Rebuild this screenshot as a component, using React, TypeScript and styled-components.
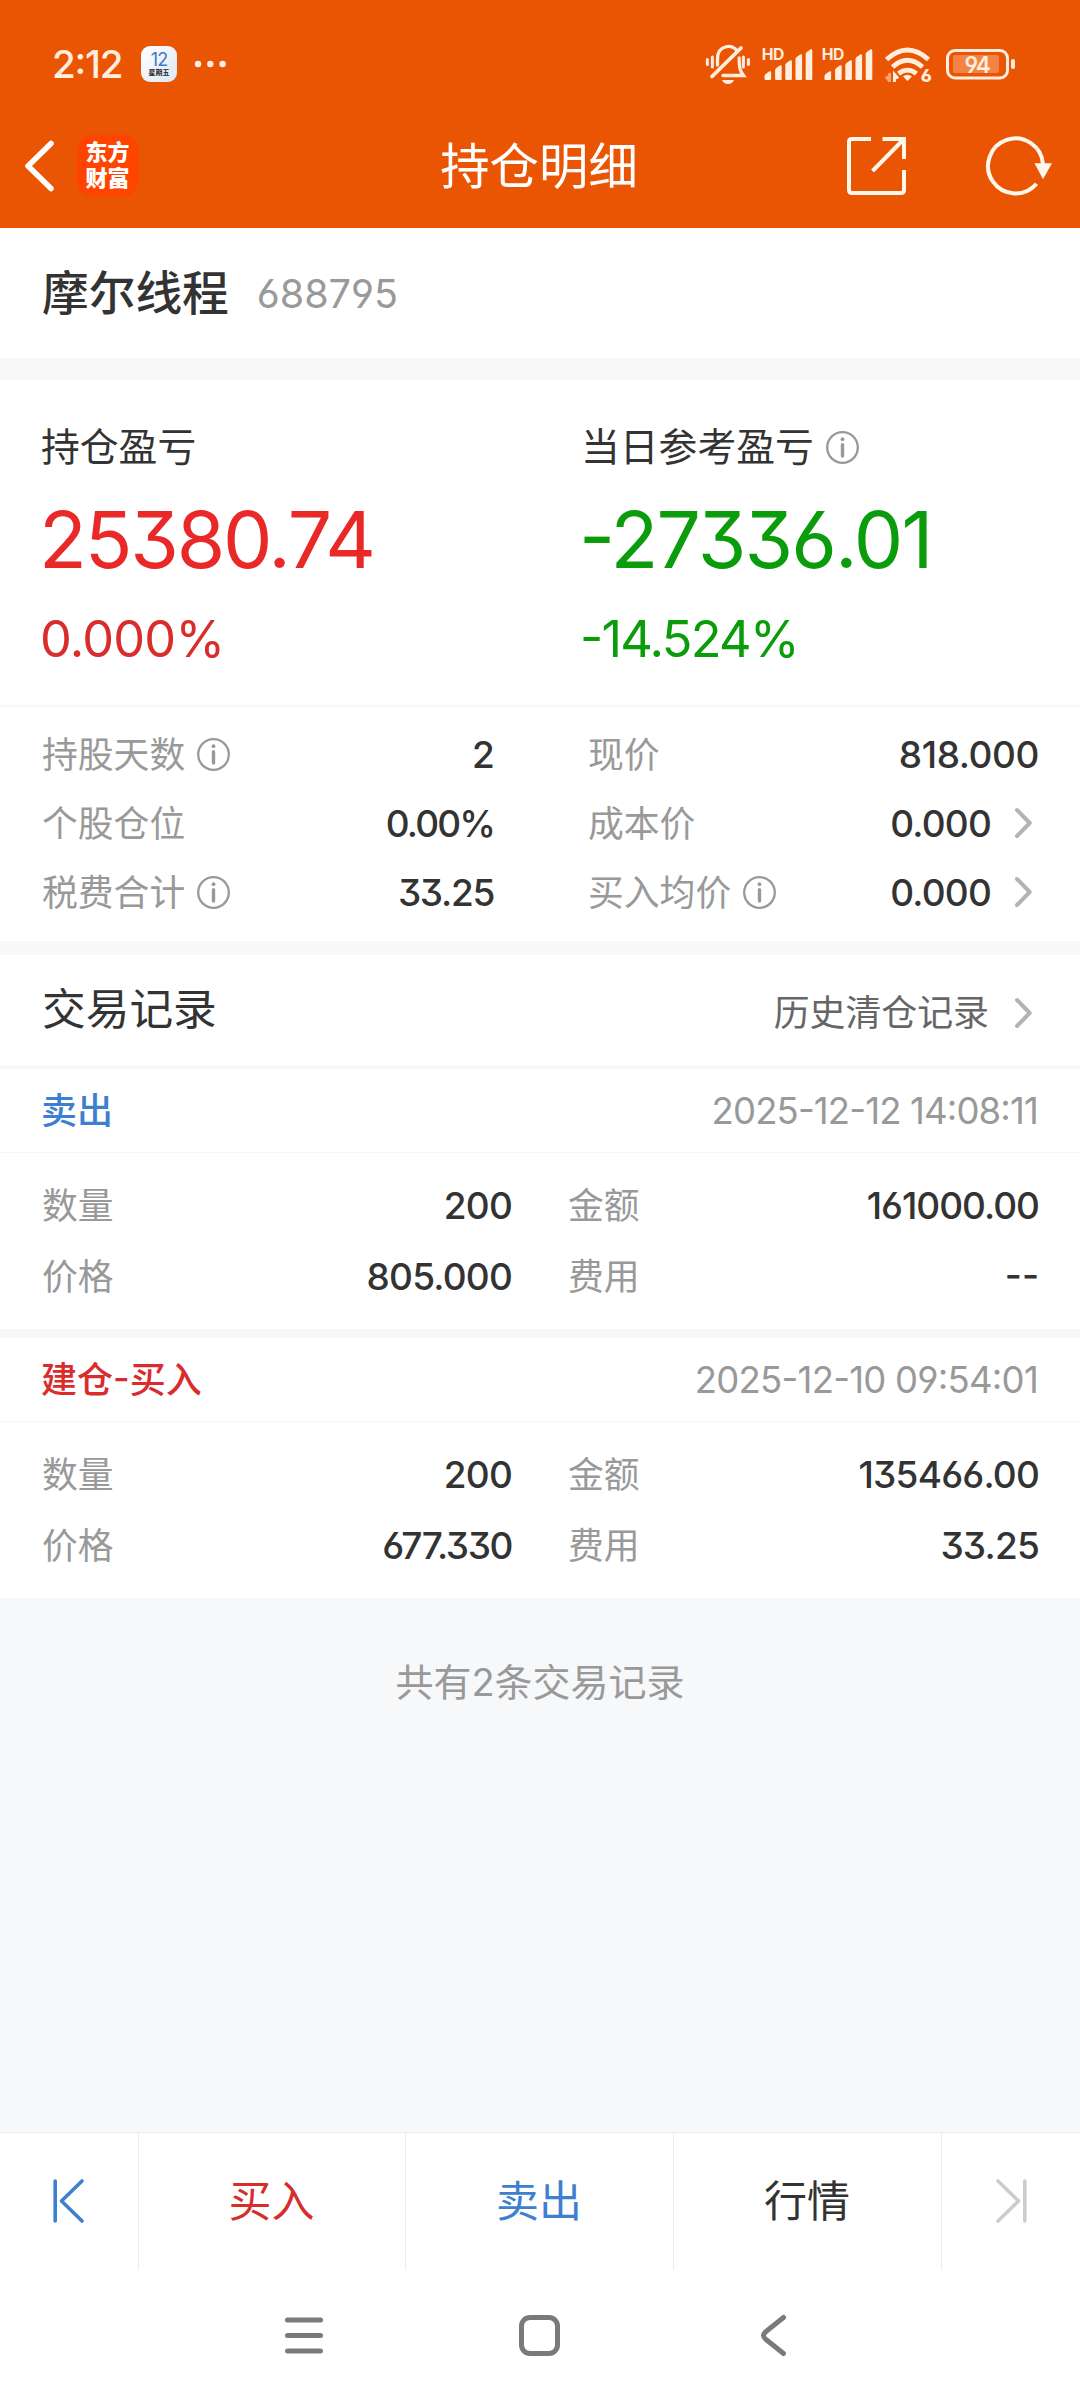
import React from "react";
import styled, { createGlobalStyle } from "styled-components";

const color = {
  brand: "#ea5504",
  cream: "#ffeedd",
  ink: "#333333",
  mid: "#666666",
  soft: "#999999",
  red: "#d92c2c",
  brightRed: "#e92828",
  green: "#0a9c0a",
  blue: "#3e7fd0",
  gap: "#f6f8fa",
};

const GlobalStyle = createGlobalStyle`
  html, body { margin: 0; padding: 0; background: #fff; }
  * { box-sizing: border-box; }
  body {
    font-family: Inter, "Noto Sans CJK SC", sans-serif;
    font-feature-settings: "case", "cv03", "cv04", "cv09";
    color: ${color.ink};
  }
  svg { display: block; flex: none; overflow: visible; }
`;

const Screen = styled.div`
  width: 1080px;
  height: 2400px;
  display: flex;
  flex-direction: column;
  background: #fff;
  overflow: hidden;
`;

const TopArea = styled.header`
  height: 228px;
  flex: none;
  background: ${color.brand};
  color: #fff;
`;

const StatusBar = styled.div`
  height: 128px;
  padding: 0 65px 0 52px;
  display: flex;
  align-items: center;
  color: ${color.cream};
`;

const Clock = styled.span`
  width: 89px;
  font-size: 38.5px;
  line-height: 44px;
  font-weight: 500;
  letter-spacing: -1.2px;
`;

const CalendarBadge = styled.div`
  width: 36px;
  height: 36px;
  margin-right: 17px;
  border-radius: 9px;
  background: linear-gradient(135deg, #fff, #dfe7f1);
  display: flex;
  flex-direction: column;
  align-items: center;
  padding-top: 5px;
`;

const CalendarDay = styled.span`
  font-size: 18px;
  line-height: 18px;
  letter-spacing: -1px;
  color: #3d7cc9;
`;

const CalendarWeek = styled.span`
  font-size: 7px;
  line-height: 8px;
  font-weight: 700;
  color: #222;
`;

const StatusIcons = styled.div`
  margin-left: auto;
  display: flex;
`;

const TitleBar = styled.div`
  height: 75px;
  padding: 0 28px 0 24px;
  display: grid;
  grid-template-columns: 1fr auto 1fr;
  align-items: center;
`;

const TitleSide = styled.div<{ $end?: boolean }>`
  display: flex;
  align-items: center;
  justify-content: ${(p) => (p.$end ? "flex-end" : "flex-start")};
  gap: ${(p) => (p.$end ? 80 : 22)}px;
`;

const PageTitle = styled.h1`
  margin: 0;
  padding-left: 2px;
  font-size: 49.4px;
  line-height: 60px;
  font-weight: 400;
`;

const BrandMark = styled.div`
  width: 61px;
  height: 61px;
  border-radius: 14px;
  background: #ff4400;
  display: flex;
  flex-direction: column;
  align-items: center;
  justify-content: center;
  padding-bottom: 2px;
  font-size: 22px;
  line-height: 26px;
  font-weight: 900;
`;

const StockRow = styled.section`
  height: 130px;
  padding: 0 42px;
  display: flex;
  align-items: center;
  gap: 28px;
`;

const StockName = styled.span`
  font-size: 46.7px;
  line-height: 60px;
  font-weight: 500;
`;

const StockCode = styled.span`
  padding-top: 2px;
  font-size: 39.5px;
  line-height: 60px;
  color: ${color.soft};
`;

const Gap = styled.div<{ $h: number }>`
  height: ${(p) => p.$h}px;
  flex: none;
  background: ${color.gap};
`;

const Summary = styled.section`
  height: 327px;
  padding: 40px 42px 0 41px;
  display: grid;
  grid-template-columns: 540px 1fr;
  border-bottom: 2px solid #f7f7f8;
`;

const SummaryTitle = styled.div`
  display: flex;
  align-items: center;
  gap: 12px;
  height: 54px;
  font-size: 38.8px;
  line-height: 54px;
`;

const BigNumber = styled.div<{ $tone: string; $track: number }>`
  margin: 21px 0 0 -2px;
  font-size: 78.5px;
  line-height: 90px;
  letter-spacing: ${(p) => p.$track}px;
  color: ${(p) => p.$tone};
`;

const Percent = styled.div<{ $tone: string; $track: number }>`
  margin: 24px 0 0 -1px;
  font-size: 50.5px;
  line-height: 60px;
  letter-spacing: ${(p) => p.$track}px;
  color: ${(p) => p.$tone};
`;

const DetailGrid = styled.section`
  height: 234px;
  padding: 12px 43px 0 42px;
  display: grid;
  grid-template-columns: 450px 449px;
  column-gap: 96px;
  grid-auto-rows: 69px;
`;

const TradeGrid = styled.div`
  padding: 17px 43px 0 42px;
  display: grid;
  grid-template-columns: 468px 469px;
  column-gap: 58px;
  grid-auto-rows: 70.5px;
`;

const Cell = styled.div`
  display: flex;
  align-items: center;
`;

const Label = styled.span`
  display: flex;
  align-items: center;
  gap: 12px;
  padding-top: 2px;
  font-size: 35.8px;
  line-height: 50px;
  color: ${color.soft};
`;

const Value = styled.span<{ $track?: number }>`
  margin-left: auto;
  margin-right: -2px;
  padding-top: 2px;
  font-size: 37px;
  line-height: 50px;
  font-weight: 450;
  letter-spacing: ${(p) => p.$track ?? -0.8}px;
`;

const ChevronSlot = styled.span`
  padding: 0 5px 0 26px;
`;

const RecordsHead = styled.section`
  height: 110px;
  padding: 0 43px 0 42px;
  display: flex;
  align-items: center;
  justify-content: space-between;
`;

const RecordsTitle = styled.h2`
  margin: 0 0 1px;
  font-size: 43.7px;
  line-height: 56px;
  font-weight: 400;
`;

const HistoryLink = styled.a`
  margin-top: 5px;
  display: flex;
  align-items: center;
  font-size: 35.9px;
  line-height: 50px;
  color: ${color.mid};
`;

const TradeCard = styled.article`
  height: 260px;
  flex: none;
`;

const TradeHead = styled.div`
  height: 84px;
  padding: 0 42px 0 41px;
  display: flex;
  align-items: center;
  justify-content: space-between;
  border-bottom: 1px solid #f4f5f5;
`;

const TradeKind = styled.span<{ $tone: string }>`
  font-size: 36px;
  line-height: 50px;
  font-weight: 500;
  color: ${(p) => p.$tone};
`;

const TradeTime = styled.time<{ $track: number }>`
  padding-top: 1px;
  font-size: 36.5px;
  line-height: 50px;
  letter-spacing: ${(p) => p.$track}px;
  color: ${color.soft};
`;

const EndNote = styled.div`
  flex: 1;
  padding-top: 59px;
  background: ${color.gap};
  text-align: center;
  font-size: 38px;
  line-height: 50px;
  color: ${color.soft};
`;

const ActionBar = styled.nav`
  height: 138px;
  flex: none;
  display: grid;
  grid-template-columns: 139px 267px 268px 268px 138px;
  border-top: 1px solid #ececec;
`;

const Action = styled.button<{ $tone?: string }>`
  border: 0;
  border-right: 1px solid #ececec;
  padding: 0 1px 2px 0;
  background: none;
  display: flex;
  align-items: center;
  justify-content: center;
  font-family: inherit;
  font-size: 43px;
  line-height: 56px;
  color: ${(p) => p.$tone ?? color.ink};
  &:last-child { border-right: 0; padding-right: 0; }
`;

const SystemNav = styled.div`
  height: 130px;
  flex: none;
  padding: 0 285px;
  display: grid;
  grid-template-columns: 38px 433px 35px;
  align-items: center;
  justify-items: center;
`;

const Info = () => (
  <svg width="33" height="33" viewBox="0 0 33 33" fill="none" stroke="#999">
    <circle cx="16.5" cy="16.5" r="15.3" strokeWidth="2.3" />
    <path d="M16.5 13.8V25" strokeWidth="3.4" strokeLinecap="round" />
    <circle cx="16.5" cy="8.2" r="1.9" fill="#999" stroke="none" />
  </svg>
);

const Chevron = () => (
  <ChevronSlot>
    <svg width="17" height="30" viewBox="0 0 17 30" fill="none" stroke="#b3b3b3" strokeWidth="4" strokeLinecap="round" strokeLinejoin="round">
      <path d="M2 2 14.7 15 2 28" />
    </svg>
  </ChevronSlot>
);

const bars = [
  [0, 52], [10.6, 46], [20.8, 41], [31, 35], [41.2, 30],
];

const Signal = ({ x }: { x: number }) => (
  <g>
    <text x={x - 2.7} y="39.7" fontSize="15.7" fontWeight="700" letterSpacing="-0.4">HD</text>
    {bars.map(([dx, top]) => (
      <path key={dx} d={`M${x + dx} ${top + 4}q0-1.2 1.2-2l3.4-2.4q2-1.2 2 1V59q0 1-1 1h-4.6q-1 0-1-1z`} />
    ))}
  </g>
);

const StatusGlyphs = () => (
  <svg width="310" height="60" viewBox="15 14 310 60" fill={color.cream} stroke="none">
    {/* muted bell with vibration marks */}
    <g fill="none" stroke={color.cream} strokeWidth="3.3" strokeLinecap="round">
      <path d="M17.4 39.5v5M22.4 37v10M53.4 37v10M58.4 39.5v5" strokeWidth="3" />
      <path d="M27.5 45V39C27.5 24 44 24 47 31" />
      <path d="M22 56.5 51 28" strokeWidth="3.8" />
      <path d="M33 55.5H53.5C50 51 49.2 48 49.2 38" />
    </g>
    <path d="M32 60h12q-1.5 4-6 4t-6-4z" />
    <Signal x={74.5} />
    <Signal x={134.5} />
    {/* wifi */}
    <g fill="none" stroke={color.cream} strokeWidth="4.8">
      <path d="M196.5 39.5Q217.5 20.5 238.5 39.5" />
      <path d="M202.5 47Q217.5 33.5 232.5 47" />
      <path d="M208.5 53.7Q217.5 46.5 226.5 53.7" />
    </g>
    <path d="M213 56.5q4.5-3.5 9 0L217.5 61z" />
    <path d="M199.500 53v9M199.500 61l-3.500-4.500" fill="none" stroke="#f9a36d" strokeWidth="3" />
    <path d="M204.500 62V54.500l3.500 4" fill="none" stroke={color.cream} strokeWidth="3" />
    <text x="230.8" y="62.3" fontSize="17.5" fontWeight="800">6</text>
    {/* battery */}
    <rect x="257.5" y="30.5" width="60" height="27.5" rx="7.5" fill="none" stroke={color.cream} strokeWidth="3" />
    <rect x="263" y="35" width="46" height="18" rx="2" fill="#f28446" />
    <rect x="321" y="39" width="4" height="10" rx="2" />
    <text x="287" y="52.7" textAnchor="middle" fontSize="22.5" fontWeight="600" letterSpacing="-1.3">94</text>
  </svg>
);

const Dots = () => (
  <svg width="32" height="8" viewBox="0 0 32 8" fill={color.cream}>
    <circle cx="4" cy="4" r="3.2" />
    <circle cx="16.3" cy="4" r="3.2" />
    <circle cx="28.6" cy="4" r="3.2" />
  </svg>
);

const BackIcon = () => (
  <svg width="31" height="50" viewBox="0 0 31 50" fill="none" stroke="#fff" strokeWidth="5.5" strokeLinejoin="round">
    <path d="M27 2.5 4 25 27 47.5" strokeLinecap="round" />
  </svg>
);

const ShareIcon = () => (
  <svg width="59" height="58" viewBox="0 0 59 58" fill="none" stroke="#fff7ea" strokeWidth="4">
    <path d="M24 2H5Q2 2 2 5V53Q2 56 5 56H54Q57 56 57 53V33" />
    <path d="M35.5 2H57V22M56 3 25.5 34" />
  </svg>
);

const RefreshIcon = () => (
  <svg width="66" height="60" viewBox="0 0.7 66 60" fill="none" stroke="#fff7ea" strokeWidth="4">
    <path d="M50.5 48.5A27.5 27.5 0 1 1 57 29" />
    <path d="M48.5 28H66L57 44z" fill="#fff7ea" stroke="none" />
  </svg>
);

const EdgeIcon = ({ tone, flip }: { tone: string; flip?: boolean }) => (
  <svg width="31" height="44" viewBox="0 0 31 44" fill="none" stroke={tone} strokeWidth="3.6" strokeLinecap="round" strokeLinejoin="round">
    <path d={flip ? "M28.8 2V42M2 2 22.5 22 2 42" : "M2.2 2V42M29 2 8.5 22 29 42"} />
  </svg>
);

interface Field {
  label: string;
  value: string;
  info?: boolean;
  link?: boolean;
  track?: number;
}

const details: Field[] = [
  { label: "持股天数", value: "2", info: true },
  { label: "现价", value: "818.000", track: -0.4 },
  { label: "个股仓位", value: "0.00%", track: -1.9 },
  { label: "成本价", value: "0.000", link: true },
  { label: "税费合计", value: "33.25", info: true, track: -1.3 },
  { label: "买入均价", value: "0.000", info: true, link: true },
];

const trades = [
  {
    kind: "卖出",
    tone: color.blue,
    time: "2025-12-12 14:08:11",
    track: -0.85,
    fields: [
      { label: "数量", value: "200" },
      { label: "金额", value: "161000.00", track: -1 },
      { label: "价格", value: "805.000" },
      { label: "费用", value: "--", track: 0 },
    ] as Field[],
  },
  {
    kind: "建仓-买入",
    tone: color.red,
    time: "2025-12-10 09:54:01",
    track: -0.75,
    fields: [
      { label: "数量", value: "200" },
      { label: "金额", value: "135466.00" },
      { label: "价格", value: "677.330", track: -1.4 },
      { label: "费用", value: "33.25" },
    ] as Field[],
  },
];

const FieldCell = ({ field }: { field: Field }) => (
  <Cell>
    <Label>
      {field.label}
      {field.info && <Info />}
    </Label>
    <Value $track={field.track}>{field.value}</Value>
    {field.link && <Chevron />}
  </Cell>
);

export default function App() {
  return (
    <Screen>
      <GlobalStyle />
      <TopArea>
        <StatusBar>
          <Clock>2:12</Clock>
          <CalendarBadge>
            <CalendarDay>12</CalendarDay>
            <CalendarWeek>星期五</CalendarWeek>
          </CalendarBadge>
          <Dots />
          <StatusIcons>
            <StatusGlyphs />
          </StatusIcons>
        </StatusBar>
        <TitleBar>
          <TitleSide>
            <BackIcon />
            <BrandMark>
              <span>东方</span>
              <span>财富</span>
            </BrandMark>
          </TitleSide>
          <PageTitle>持仓明细</PageTitle>
          <TitleSide $end>
            <ShareIcon />
            <RefreshIcon />
          </TitleSide>
        </TitleBar>
      </TopArea>

      <StockRow>
        <StockName>摩尔线程</StockName>
        <StockCode>688795</StockCode>
      </StockRow>
      <Gap $h={22} />

      <Summary>
        <div>
          <SummaryTitle>持仓盈亏</SummaryTitle>
          <BigNumber $tone={color.brightRed} $track={-2.2}>25380.74</BigNumber>
          <Percent $tone={color.red} $track={-0.8}>0.000%</Percent>
        </div>
        <div>
          <SummaryTitle>
            当日参考盈亏
            <Info />
          </SummaryTitle>
          <BigNumber $tone={color.green} $track={-1.9}>-27336.01</BigNumber>
          <Percent $tone={color.green} $track={-1.7}>-14.524%</Percent>
        </div>
      </Summary>

      <DetailGrid>
        {details.map((f) => (
          <FieldCell key={f.label} field={f} />
        ))}
      </DetailGrid>
      <Gap $h={14} />

      <RecordsHead>
        <RecordsTitle>交易记录</RecordsTitle>
        <HistoryLink>
          历史清仓记录
          <Chevron />
        </HistoryLink>
      </RecordsHead>

      {trades.map((t, i) => (
        <React.Fragment key={t.time}>
          <Gap $h={i === 0 ? 4 : 9} />
          <TradeCard>
            <TradeHead>
              <TradeKind $tone={t.tone}>{t.kind}</TradeKind>
              <TradeTime $track={t.track}>{t.time}</TradeTime>
            </TradeHead>
            <TradeGrid>
              {t.fields.map((f) => (
                <FieldCell key={f.label} field={f} />
              ))}
            </TradeGrid>
          </TradeCard>
        </React.Fragment>
      ))}

      <EndNote>共有2条交易记录</EndNote>

      <ActionBar>
        <Action><EdgeIcon tone={color.blue} /></Action>
        <Action $tone={color.red}>买入</Action>
        <Action $tone={color.blue}>卖出</Action>
        <Action>行情</Action>
        <Action><EdgeIcon tone="#cccccc" flip /></Action>
      </ActionBar>
      <SystemNav>
        <svg width="38" height="37" viewBox="0 0 38 37" stroke="#7a7a7a" strokeWidth="5" strokeLinecap="round">
          <path d="M2.5 3H35.5M2.5 18.5H35.5M2.5 34H35.5" />
        </svg>
        <svg width="41" height="41" viewBox="0 0 41 41" fill="none" stroke="#7a7a7a" strokeWidth="5">
          <rect x="2.5" y="2.5" width="36" height="36" rx="8.5" />
        </svg>
        <svg width="25" height="41" viewBox="0 0 25 41" fill="none" stroke="#7a7a7a" strokeWidth="5" strokeLinecap="round">
          <path d="M22.5 2.5 5 16.5Q0 20.5 5 24.5L22.5 38.5" />
        </svg>
      </SystemNav>
    </Screen>
  );
}
